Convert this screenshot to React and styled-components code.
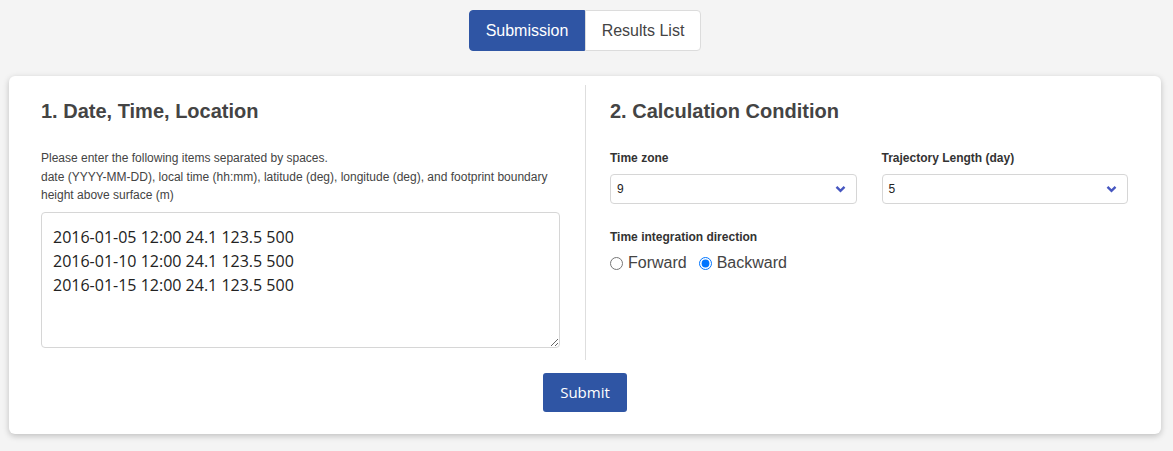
import React from 'react'
import styled, { createGlobalStyle } from 'styled-components'

const GlobalStyle = createGlobalStyle`
    body {
        margin: 0;
        background: #f4f4f4;
        font-family: 'Liberation Sans', Arial, sans-serif;
        color: #333;
    }
`

const Page = styled.div`
    padding: 10px 12px 18px 9px;
`

const TabBar = styled.nav`
    display: flex;
    justify-content: center;
    margin-bottom: 25px;
`

const Tab = styled.button`
    height: 41px;
    width: 116px;
    padding: 0;
    white-space: nowrap;
    font-family: 'Liberation Sans', Arial, sans-serif;
    font-size: 16px;
    border: 1px solid ${p => (p.active ? '#2f55a4' : '#dcdcdc')};
    background: ${p => (p.active ? '#2f55a4' : '#fff')};
    color: ${p => (p.active ? '#fff' : '#444')};
    border-radius: ${p => (p.first ? '4px 0 0 4px' : '0 4px 4px 0')};
    cursor: pointer;
`

const Card = styled.main`
    background: #fff;
    border-radius: 6px;
    box-shadow: 0 2px 6px rgba(0, 0, 0, 0.22);
    padding: 9px 8px 22px;
`

const Columns = styled.div`
    display: grid;
    grid-template-columns: 1fr 1fr;
`

const Column = styled.section`
    padding: 14px 25px 12px 24px;
    border-left: ${p => (p.divided ? '1px solid #dedede' : 'none')};
`

const Heading = styled.h2`
    margin: 0 0 26px;
    font-size: 20px;
    line-height: 24px;
    font-weight: bold;
    color: #444;
`

const Hint = styled.p`
    margin: 0 0 7px;
    font-size: 12px;
    line-height: 18.5px;
    color: #444;
`

const Entry = styled.textarea`
    display: block;
    box-sizing: border-box;
    width: 100%;
    height: 136px;
    padding: 12px 11px;
    border: 1px solid #d6d6d6;
    border-radius: 4px;
    font-family: 'Open Sans', 'Noto Sans', sans-serif;
    font-size: 16px;
    line-height: 24px;
    color: #222;
    resize: vertical;
    outline: none;
`

const FieldRow = styled.div`
    display: grid;
    grid-template-columns: 1fr 1fr;
    gap: 25px;
    margin-bottom: 24px;
`

const Field = styled.div`
    display: flex;
    flex-direction: column;
`

const Label = styled.label`
    font-size: 12px;
    line-height: 18px;
    font-weight: bold;
    color: #333;
    margin-bottom: 7px;
`

const SelectBox = styled.div`
    height: 30px;
    box-sizing: border-box;
    border: 1px solid #d6d6d6;
    border-radius: 4px;
    display: flex;
    align-items: center;
    padding: 0 6px;
    font-size: 12px;
    color: #222;
`

const Chevron = styled.svg`
    margin-left: auto;
    margin-right: 4px;
`

const Radios = styled.div`
    display: flex;
    align-items: center;
    gap: 12px;
    margin-top: 1px;
`

const RadioLabel = styled.label`
    display: flex;
    align-items: center;
    font-size: 16px;
    color: #444;

    input {
        margin: 0 5px 0 0;
        width: 13px;
        height: 13px;
    }
`

const Actions = styled.div`
    display: flex;
    justify-content: center;
    margin-top: 13px;
`

const SubmitButton = styled.button`
    height: 39px;
    padding: 0 17px;
    background: #2f55a4;
    color: #fff;
    border: none;
    border-radius: 3px;
    font-family: 'Open Sans', 'Noto Sans', sans-serif;
    font-size: 15px;
    cursor: pointer;
`

function Select({ value }) {
    return (
        <SelectBox>
            {value}
            <Chevron width="11" height="8" viewBox="0 0 11 8">
                <path d="M1.5 1.8 L5.5 5.8 L9.5 1.8" fill="none" stroke="#4656c0" strokeWidth="2.4" />
            </Chevron>
        </SelectBox>
    )
}

function App() {
    return (
        <Page>
            <GlobalStyle />
            <TabBar>
                <Tab active first>Submission</Tab>
                <Tab>Results List</Tab>
            </TabBar>
            <Card>
                <Columns>
                    <Column>
                        <Heading>1. Date, Time, Location</Heading>
                        <Hint>
                            Please enter the following items separated by spaces.<br />
                            date (YYYY-MM-DD), local time (hh:mm), latitude (deg), longitude (deg), and footprint boundary height above surface (m)
                        </Hint>
                        <Entry
                            defaultValue={'2016-01-05 12:00 24.1 123.5 500\n2016-01-10 12:00 24.1 123.5 500\n2016-01-15 12:00 24.1 123.5 500'}
                        />
                    </Column>
                    <Column divided>
                        <Heading>2. Calculation Condition</Heading>
                        <FieldRow>
                            <Field>
                                <Label>Time zone</Label>
                                <Select value="9" />
                            </Field>
                            <Field>
                                <Label>Trajectory Length (day)</Label>
                                <Select value="5" />
                            </Field>
                        </FieldRow>
                        <Field>
                            <Label>Time integration direction</Label>
                            <Radios>
                                <RadioLabel>
                                    <input type="radio" name="dir" /> Forward
                                </RadioLabel>
                                <RadioLabel>
                                    <input type="radio" name="dir" defaultChecked /> Backward
                                </RadioLabel>
                            </Radios>
                        </Field>
                    </Column>
                </Columns>
                <Actions>
                    <SubmitButton>Submit</SubmitButton>
                </Actions>
            </Card>
        </Page>
    )
}

export default App
